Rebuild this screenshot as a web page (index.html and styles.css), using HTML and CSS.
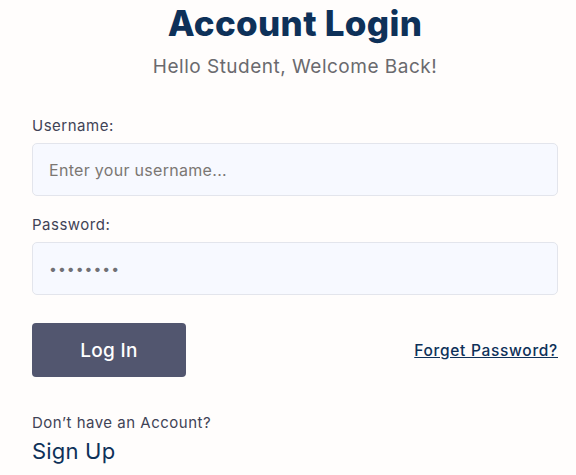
FILE: index.html
```html
<!DOCTYPE html>
<html lang="en">
<head>
<meta charset="utf-8">
<title>Account Login</title>
<link rel="stylesheet" href="styles.css">
</head>
<body>
<main class="login">
  <header class="login-head">
    <h1 class="title">Account Login</h1>
    <p class="subtitle">Hello Student, Welcome Back!</p>
  </header>
  <form class="login-form">
    <div class="field">
      <label class="label" for="username">Username:</label>
      <input class="input" id="username" type="text" placeholder="Enter your username...">
    </div>
    <div class="field">
      <label class="label" for="password">Password:</label>
      <input class="input input-pass" id="password" type="password" value="password">
    </div>
    <div class="actions">
      <button class="btn" type="button">Log In</button>
      <a class="forgot" href="#">Forget Password?</a>
    </div>
  </form>
  <div class="signup">
    <p class="signup-text">Don’t have an Account?</p>
    <a class="signup-link" href="#">Sign Up</a>
  </div>
</main>
</body>
</html>
```

FILE: styles.css
```css
* { box-sizing: border-box; }
html, body {
  margin: 0;
  background: #fffdfc;
}
body {
  font-family: "Inter", "Open Sans", sans-serif;
  color: #3f4356;
}
.login {
  padding: 0 18px 0 32px;
}
.login-head {
  text-align: center;
}
.title {
  margin: 0;
  padding-top: 3px;
  font-size: 35px;
  line-height: 40px;
  font-weight: 800;
  color: #0e3159;
  letter-spacing: 0.3px;
}
.subtitle {
  margin: 12px 0 0;
  font-size: 19px;
  line-height: 24px;
  color: #6a6a6e;
  letter-spacing: 0.5px;
}
.login-form {
  margin-top: 38px;
  display: flex;
  flex-direction: column;
  gap: 20px;
}
.field {
  display: flex;
  flex-direction: column;
  gap: 8px;
}
.label {
  font-size: 15px;
  line-height: 18px;
  color: #3f4356;
  letter-spacing: 0.5px;
}
.input {
  height: 53px;
  width: 100%;
  border: 1px solid #e3e5ec;
  border-radius: 5px;
  background: #f7f9ff;
  padding: 0 16px;
  font-family: inherit;
  font-size: 16px;
  color: #6f6f74;
  letter-spacing: 0.3px;
  outline: none;
}
.input::placeholder {
  color: #7b7773;
}
.input-pass {
  font-size: 14px;
  letter-spacing: 1px;
  color: #707075;
}
.actions {
  margin-top: 8px;
  display: flex;
  align-items: center;
  justify-content: space-between;
}
.btn {
  width: 154px;
  height: 54px;
  border: none;
  border-radius: 4px;
  background: #52566f;
  color: #ffffff;
  font-family: inherit;
  font-size: 19px;
  font-weight: 500;
  letter-spacing: 0.3px;
}
.forgot {
  font-size: 15.5px;
  font-weight: 500;
  color: #0e3159;
  text-decoration: underline;
  letter-spacing: 0.7px;
}
.signup {
  margin-top: 37px;
}
.signup-text {
  margin: 0;
  font-size: 15px;
  line-height: 18px;
  color: #3f4356;
  letter-spacing: 0.5px;
}
.signup-link {
  display: inline-block;
  margin-top: 5px;
  font-size: 22px;
  line-height: 28px;
  color: #0e3159;
  text-decoration: none;
  letter-spacing: 0.2px;
}
```
